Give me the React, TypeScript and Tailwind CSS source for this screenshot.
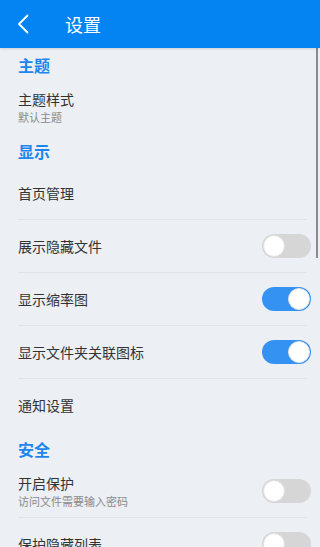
const FONT = { fontFamily: '"Noto Sans CJK SC", "Noto Sans", sans-serif' }

// ─── Types ────────────────────────────────────────────────────────────────────

type Row =
  | { kind: 'title'; text: string }
  | { kind: 'item'; text: string; sub?: string; toggle?: boolean; divider?: boolean }

const rows: Row[] = [
  { kind: 'title', text: '主题' },
  { kind: 'item', text: '主题样式', sub: '默认主题' },
  { kind: 'title', text: '显示' },
  { kind: 'item', text: '首页管理', divider: true },
  { kind: 'item', text: '展示隐藏文件', toggle: false, divider: true },
  { kind: 'item', text: '显示缩率图', toggle: true, divider: true },
  { kind: 'item', text: '显示文件夹关联图标', toggle: true, divider: true },
  { kind: 'item', text: '通知设置' },
  { kind: 'title', text: '安全' },
  { kind: 'item', text: '开启保护', sub: '访问文件需要输入密码', toggle: false, divider: true },
  { kind: 'item', text: '保护隐藏列表', toggle: false, divider: true },
]

// ─── Sub-components ───────────────────────────────────────────────────────────

function Toggle({ on }: { on: boolean }) {
  return (
    <div
      className={
        on
          ? 'w-[49px] h-[24px] rounded-full bg-[#3392F2] flex items-center justify-end px-[1px] shrink-0'
          : 'w-[49px] h-[24px] rounded-full bg-[#D6D6D6] flex items-center justify-start px-[1px] shrink-0'
      }
    >
      <div className="w-[22px] h-[22px] rounded-full bg-white border border-[#E2E2E2]" />
    </div>
  )
}

function SectionTitle({ text }: { text: string }) {
  return (
    <div className="h-[33px] flex items-center px-[18px]">
      <span className="text-[16px] leading-[20px] font-bold text-[#1C86EE]" style={FONT}>
        {text}
      </span>
    </div>
  )
}

function Item({ text, sub, toggle, divider }: Extract<Row, { kind: 'item' }>) {
  return (
    <div className="h-[53px] flex flex-col">
      <div className="flex-1 flex items-center justify-between pl-[18px] pr-[9px]">
        <div className="flex flex-col" style={FONT}>
          <span className="text-[14px] leading-[18px] text-[#333333]">{text}</span>
          {sub && <span className="text-[11px] leading-[15px] mt-[2px] text-[#8A8A8A]">{sub}</span>}
        </div>
        {toggle !== undefined && <Toggle on={toggle} />}
      </div>
      <div className={divider ? 'h-px ml-[18px] mr-[13px] bg-[#E0E3E7]' : 'h-px'} />
    </div>
  )
}

// ─── App ──────────────────────────────────────────────────────────────────────

export default function App() {
  return (
    <div className="relative w-[320px] h-[547px] overflow-hidden bg-[#ECEFF3]">
      <header className="h-12 bg-[#0384F2] flex items-center shadow-[0_1px_2px_rgba(0,0,0,0.12)] relative z-10">
        <div className="w-[65px] flex items-center pl-[17px]">
          <svg width="12" height="20" viewBox="0 0 12 20" fill="none">
            <path d="M10.5 1.5 2 10l8.5 8.5" stroke="white" strokeWidth="1.8" strokeLinecap="round" strokeLinejoin="round" />
          </svg>
        </div>
        <span className="text-[18px] leading-6 text-white" style={FONT}>
          设置
        </span>
      </header>

      <div>
        {rows.map((r, i) =>
          r.kind === 'title' ? <SectionTitle key={i} text={r.text} /> : <Item key={i} {...r} />,
        )}
      </div>

      <div className="absolute right-[2px] top-12 w-[2px] h-[210px] bg-[#8C8C8C]" />
    </div>
  )
}
